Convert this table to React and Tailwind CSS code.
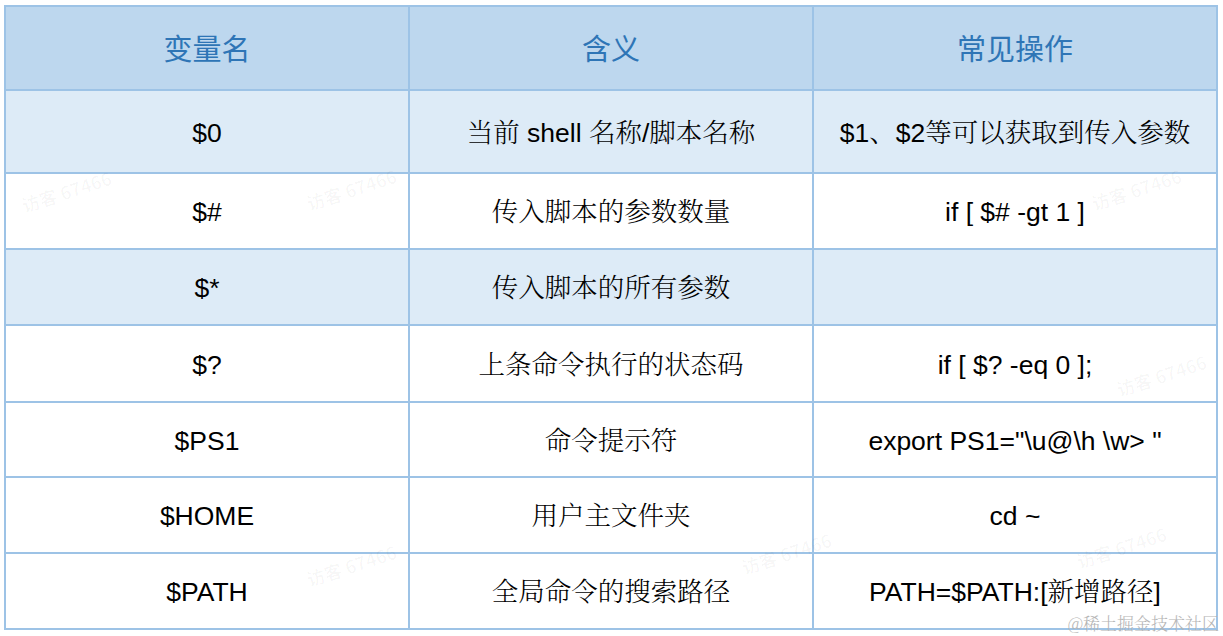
import React from "react";

const rows = [
  { name: "$0", meaning: "当前 shell 名称/脚本名称", op: "$1、$2等可以获取到传入参数", tint: true, h: "h-[83px]" },
  { name: "$#", meaning: "传入脚本的参数数量", op: "if [ $# -gt 1 ]", tint: false, h: "h-[76px]" },
  { name: "$*", meaning: "传入脚本的所有参数", op: "", tint: true, h: "h-[76px]" },
  { name: "$?", meaning: "上条命令执行的状态码", op: "if [ $? -eq 0 ];", tint: false, h: "h-[77px]" },
  { name: "$PS1", meaning: "命令提示符", op: "export PS1=\"\\u@\\h \\w> \"", tint: false, h: "h-[75px]" },
  { name: "$HOME", meaning: "用户主文件夹", op: "cd ~", tint: false, h: "h-[76px]" },
  { name: "$PATH", meaning: "全局命令的搜索路径", op: "PATH=$PATH:[新增路径]", tint: false, h: "h-[76px]" },
];

// faint visitor watermarks, kept to the empty parts of cells
const marks = [
  "left-[20px] top-[178px]",
  "left-[305px] top-[176px]",
  "left-[1090px] top-[176px]",
  "left-[1115px] top-[362px]",
  "left-[305px] top-[552px]",
  "left-[740px] top-[540px]",
  "left-[1075px] top-[534px]",
];

export default function App() {
  const cell = "border-2 border-[#9dc3e6] text-center align-middle p-0";
  return (
    <div className="relative w-[1223px] h-[636px] bg-white overflow-hidden font-['Liberation_Sans','Noto_Serif_CJK_SC','Noto_Sans_CJK_SC',sans-serif]">
      <div className="pl-[4px] pt-[5px]">
        <table className="table-fixed border-collapse w-[1214px]">
          <thead>
            <tr className="h-[84px] bg-[#bdd7ee]">
              {["变量名", "含义", "常见操作"].map((t) => (
                <th
                  key={t}
                  className={`${cell} font-normal text-[29px] text-[#2e75b6] font-['Noto_Sans_CJK_SC',sans-serif]`}
                >
                  {t}
                </th>
              ))}
            </tr>
          </thead>
          <tbody>
            {rows.map((r) => (
              <tr key={r.name} className={`${r.h} ${r.tint ? "bg-[#ddebf7]" : "bg-white"}`}>
                <td className={`${cell} text-[26.5px] text-black font-light pt-[4px]`}>{r.name}</td>
                <td className={`${cell} text-[26.5px] text-black font-light pt-[4px]`}>{r.meaning}</td>
                <td className={`${cell} text-[26.5px] text-black font-light pt-[4px]`}>{r.op}</td>
              </tr>
            ))}
          </tbody>
        </table>
      </div>

      {marks.map((m) => (
        <div
          key={m}
          className={`absolute ${m} -rotate-[18deg] whitespace-nowrap text-[18px] font-bold text-black/[0.03] font-['Noto_Sans_CJK_SC',sans-serif] pointer-events-none select-none`}
        >
          访客 67466
        </div>
      ))}

      <div className="absolute right-[4px] top-[610px] text-[17px] text-[#b5b5b5] font-['Noto_Serif_CJK_SC','Noto_Sans_CJK_SC',serif] font-light">
        @稀土掘金技术社区
      </div>
    </div>
  );
}
